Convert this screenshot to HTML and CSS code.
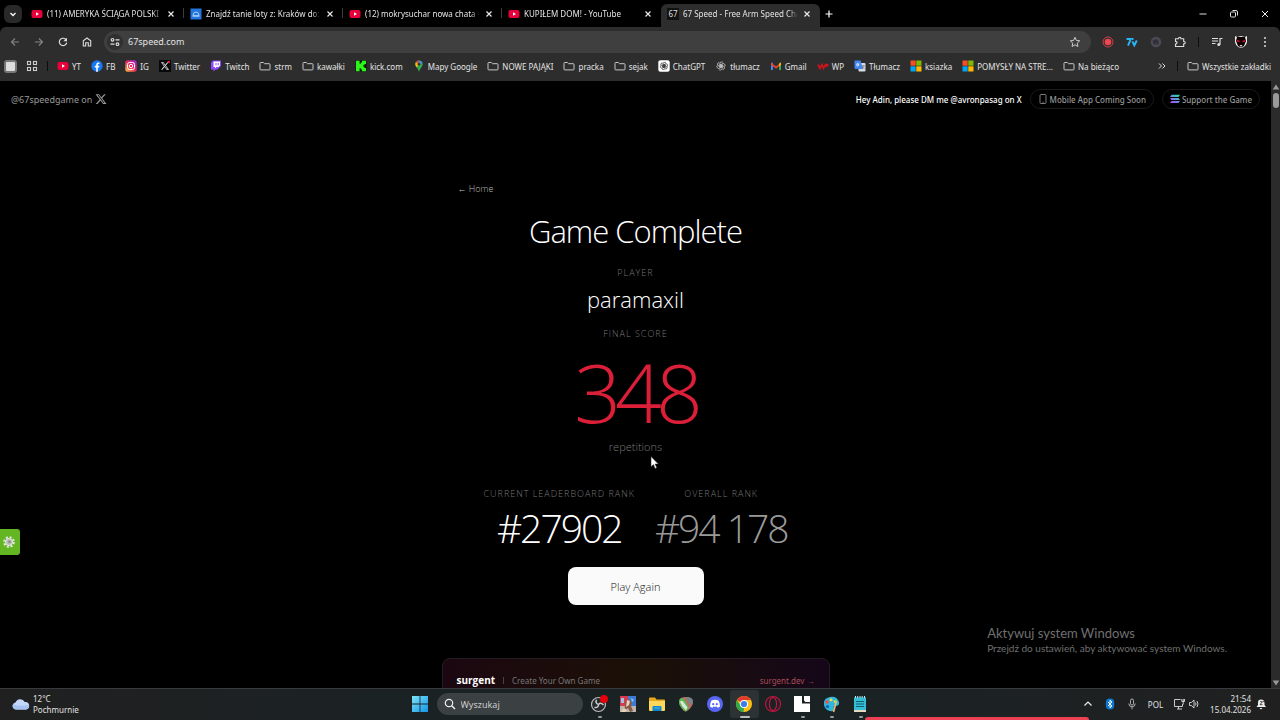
FILE: index.html
```html
<!DOCTYPE html>
<html lang="pl">
<head>
<meta charset="UTF-8">
<meta name="viewport" content="width=device-width, initial-scale=1.0">
<title>67 Speed - Free Arm Speed Challenge</title>
<link rel="stylesheet" href="styles.css">
</head>
<body>

<svg class="defs" aria-hidden="true">
<symbol id="close" viewBox="0 0 10 10"><path d="M2.5 2.5l5 5M7.5 2.5l-5 5" stroke="#e8e8e8" stroke-width="1.2"/></symbol>
<symbol id="youtube" viewBox="0 0 12 12"><rect x="0.5" y="2" width="11" height="8" rx="2" fill="#e8003a"/><path d="M5 4.3v3.4L8 6z" fill="#fff"/></symbol>
<symbol id="folder" viewBox="0 0 12 12"><path d="M1 9.2V3.2q0-.7.7-.7h2.6l1.2 1.2h4.8q.7 0 .7.7v4.8q0 .7-.7.7H1.7q-.7 0-.7-.7z" fill="none" stroke="#c7c7c7" stroke-width="1"/></symbol>
<symbol id="xlogo" viewBox="0 0 24 24"><path fill="currentColor" fill-rule="evenodd" d="M18.2 2.3h3.4l-7.3 8.3L23 21.8h-6.8l-5.3-7-6 7H1.500l7.800-8.900L1 2.300h7l4.700 6.200zM17 19.800h1.900L7.100 4.200H5z"/></symbol>
<symbol id="microsoft" viewBox="0 0 12 12"><path d="M.5.5h5.200v5.200H.500z" fill="#f25022"/><path d="M6.300.500h5.200v5.200H6.300z" fill="#7fba00"/><path d="M.500 6.300h5.200v5.200H.500z" fill="#00a4ef"/><path d="M6.300 6.300h5.200v5.200H6.300z" fill="#ffb900"/></symbol>
<symbol id="openai" viewBox="0 0 24 24"><g fill="none" stroke="currentColor" stroke-width="1.8"><path id="petal" d="M9 12V6.500a4.500 4.500 0 0 1 8.300-2.200M12 10.200l5.200 3"/><use href="#petal" transform="rotate(60 12 12)"/><use href="#petal" transform="rotate(120 12 12)"/><use href="#petal" transform="rotate(180 12 12)"/><use href="#petal" transform="rotate(240 12 12)"/><use href="#petal" transform="rotate(300 12 12)"/></g></symbol>
</svg>

<!-- Browser -->
<header class="browser">
<div class="tabs">
<button class="tab-search" aria-label="Szukaj kart"><svg viewBox="0 0 10 10" width="10" height="10"><path d="M2.500 4l2.500 2.500L7.500 4" fill="none" stroke="#fff" stroke-width="1.300"/></svg></button>
<div class="tab"><svg class="icon"><use href="#youtube"/></svg><span class="tab-title">(11) AMERYKA ŚCIĄGA POLSKI</span><button class="tab-close" aria-label="Zamknij"><svg><use href="#close"/></svg></button></div>
<div class="tab"><svg class="icon" viewBox="0 0 12 12"><rect x=".5" y=".5" width="11" height="11" fill="#2375dd"/><path d="M3 7.700q0-3.700 3-3.700t3 3.700zM2.500 8.200h7" fill="none" stroke="#a9d0ff" stroke-width="1"/></svg><span class="tab-title">Znajdź tanie loty z: Kraków do:</span><button class="tab-close" aria-label="Zamknij"><svg><use href="#close"/></svg></button></div>
<div class="tab"><svg class="icon"><use href="#youtube"/></svg><span class="tab-title">(12) mokrysuchar nowa chata -</span><button class="tab-close" aria-label="Zamknij"><svg><use href="#close"/></svg></button></div>
<div class="tab"><svg class="icon"><use href="#youtube"/></svg><span class="tab-title">KUPIŁEM DOM! - YouTube</span><button class="tab-close" aria-label="Zamknij"><svg><use href="#close"/></svg></button></div>
<div class="tab active"><span class="icon favicon">67</span><span class="tab-title">67 Speed - Free Arm Speed Cha</span><button class="tab-close" aria-label="Zamknij"><svg><use href="#close"/></svg></button></div>
<button class="new-tab" aria-label="Nowa karta"><svg viewBox="0 0 10 10" width="10" height="10"><path d="M5 1.500v7M1.500 5h7" stroke="#fff" stroke-width="1.200"/></svg></button>
<div class="window-buttons">
<button aria-label="Minimalizuj"><svg viewBox="0 0 10 10" width="10" height="10"><path d="M1.500 5h7" stroke="#ddd"/></svg></button>
<button aria-label="Przywróć"><svg viewBox="0 0 10 10" width="10" height="10"><g fill="none" stroke="#ddd"><rect x="1.500" y="3" width="5" height="5" rx="1"/><path d="M3.500 1.500h3.500q1.500 0 1.500 1.500v3.500"/></g></svg></button>
<button aria-label="Zamknij okno"><svg viewBox="0 0 10 10" width="10" height="10"><path d="M2 2l6 6M8 2l-6 6" stroke="#eee"/></svg></button>
</div>
</div>

<div class="toolbar">
<button class="tool" aria-label="Wstecz"><svg viewBox="0 0 12 12"><path d="M10 6H2.500M6 2.500L2.500 6 6 9.500" fill="none" stroke="#858585" stroke-width="1.100"/></svg></button>
<button class="tool" aria-label="Dalej"><svg viewBox="0 0 12 12"><path d="M2 6h7.500M6 2.500L9.500 6 6 9.500" fill="none" stroke="#858585" stroke-width="1.100"/></svg></button>
<button class="tool" aria-label="Odśwież"><svg viewBox="0 0 12 12"><path d="M9.200 4A3.700 3.700 0 1 0 9.700 6.600" fill="none" stroke="#ddd" stroke-width="1.200"/><path d="M10 1.700v3.600H6.400z" fill="#ddd"/></svg></button>
<button class="tool" aria-label="Strona główna"><svg viewBox="0 0 12 12"><path d="M2.300 10V4.700L6 2l3.700 2.700V10H7.300V6.800H4.700V10z" fill="none" stroke="#ddd" stroke-width="1.100"/></svg></button>
<div class="omnibox">
<button class="site-info" aria-label="Informacje o witrynie"><svg viewBox="0 0 12 12" width="12" height="12"><g fill="none" stroke="#ddd" stroke-width="1.200"><circle cx="3.500" cy="3.800" r="1.300"/><path d="M6.500 3.800h4M1.500 8.200h4"/><circle cx="8.500" cy="8.200" r="1.300"/></g></svg></button>
<input type="text" value="67speed.com" aria-label="Adres">
<button class="star" aria-label="Dodaj do zakładek"><svg viewBox="0 0 12 12" width="12" height="12"><path d="M6 1.300l1.400 3.100 3.300.400-2.400 2.300.600 3.400L6 8.800l-2.900 1.700.600-3.400-2.400-2.300 3.300-.400z" fill="none" stroke="#ccc"/></svg></button>
</div>
<button class="tool" aria-label="Nagrywanie"><svg viewBox="0 0 12 12"><circle cx="6" cy="6" r="5" fill="none" stroke="#d0424c"/><circle cx="6" cy="6" r="3.300" fill="#ef4650"/></svg></button>
<button class="tool" aria-label="7TV"><svg viewBox="0 0 12 12"><path d="M.5 3h4.300L2 9.700M6 3h1.500M6.300 5.300l2 4 2.500-4.800" fill="none" stroke="#29b6f6" stroke-width="1.900"/></svg></button>
<button class="tool" aria-label="Rozszerzenie"><svg viewBox="0 0 12 12"><circle cx="6" cy="6" r="5.200" fill="#4d4a55"/><path d="M2.500 5q2-3 5.500-1l1 3-2 2.500-1-3-1 2.500q-2-1-2.500-4z" fill="#303038"/></svg></button>
<button class="tool" aria-label="Rozszerzenia"><svg viewBox="0 0 12 12"><path d="M1.500 2.800h3q0-1.500 1.200-1.500t1.200 1.500h2.800v2.700q1.600 0 1.600 1.200T9.700 7.900v2.600H1.500V8q1.500 0 1.500-1.300T1.500 5.400z" fill="none" stroke="#ddd" stroke-width="1.100"/></svg></button>
<span class="divider"></span>
<button class="tool" aria-label="Multimedia"><svg viewBox="0 0 12 12"><path d="M1 2.500h6M1 5h6M1 7.500h3.500M9 8.500V2.500h2.500" fill="none" stroke="#ddd" stroke-width="1.200"/><circle cx="7.800" cy="8.500" r="1.500" fill="#ddd"/></svg></button>
<button class="tool" aria-label="Profil"><svg class="avatar" viewBox="0 0 14 14"><path d="M1 1l2 1 4-1 4 1 2-1v6q-1 5-6 6-5-1-6-6z" fill="#eee"/><path d="M3 2h8l1 4-2 5-3 1.500L4 11 2 6z" fill="#100"/><path d="M3 5l3 1-1 1-2-.500zM11 5L8 6l1 1 2-.500z" fill="#f2103c"/><path d="M5.500 10h3L7 12z" fill="#ddd"/></svg></button>
<button class="tool" aria-label="Menu"><svg viewBox="0 0 12 12"><g fill="#ddd"><circle cx="6" cy="2" r="1"/><circle cx="6" cy="6" r="1"/><circle cx="6" cy="10" r="1"/></g></svg></button>
</div>

<nav class="bookmarks">
<button class="square" aria-label="Panel boczny"></button>
<button class="tool apps" aria-label="Aplikacje"><svg viewBox="0 0 12 12"><g fill="none" stroke="#ccc" stroke-width="1.100"><rect x="1.500" y="1.500" width="3" height="3"/><rect x="7.500" y="1.500" width="3" height="3"/><rect x="1.500" y="7.500" width="3" height="3"/><rect x="7.500" y="7.500" width="3" height="3"/></g></svg></button>
<span class="divider"></span>
<div class="bookmark-list">
<a href="#"><svg class="icon"><use href="#youtube"/></svg>YT</a>
<a href="#"><svg class="icon" viewBox="0 0 12 12"><circle cx="6" cy="6" r="5.700" fill="#1877f2"/><path d="M5.200 11.700V7.500H3.800V5.800h1.400V4.700Q5.200 2.600 7.300 2.600h1.100v1.500h-.800q-.8 0-.8.800v.9h1.600l-.3 1.700H6.800v4.200z" fill="#fff"/></svg>FB</a>
<a href="#"><svg class="icon" viewBox="0 0 12 12"><defs><linearGradient id="ig" x1="0" y1="1" x2="1" y2="0"><stop offset="0" stop-color="#ffc83d"/><stop offset=".5" stop-color="#f0255f"/><stop offset="1" stop-color="#8e2be2"/></linearGradient></defs><rect x=".3" y=".3" width="11.400" height="11.400" rx="2.500" fill="url(#ig)"/><g fill="none" stroke="#fff"><rect x="2.500" y="2.500" width="7" height="7" rx="2"/><circle cx="6" cy="6" r="1.700"/></g></svg>IG</a>
<a href="#"><svg class="icon" viewBox="0 0 12 12"><rect width="12" height="12" fill="#080808"/><use href="#xlogo" x="1.500" y="1.500" width="9" height="9"/><circle cx="9.800" cy="2" r="1.300" fill="#e02344"/></svg>Twitter</a>
<a href="#"><svg class="icon" viewBox="0 0 12 12"><path d="M3 .5L1 2.500v7h2.500v2L5.500 9.500h2L11 6V.5z" fill="#9146ff"/><path d="M3.500 1.500H10v4L8.500 7h-2L5 8.500V7H3.500z" fill="#fff"/><path d="M6 3v2.300M8.200 3v2.300" stroke="#9146ff"/></svg>Twitch</a>
<a href="#"><svg class="icon"><use href="#folder"/></svg>strm</a>
<a href="#"><svg class="icon"><use href="#folder"/></svg>kawałki</a>
<a href="#"><svg class="icon" viewBox="0 0 12 12"><rect x=".5" y=".5" width="11" height="11" fill="#0b1a08"/><path d="M1 .8h3.600v3h1.200V2.500H7V.8h4v3.300H9.500v1.200H8.300v1.400h1.200v1.200H11v3.300H7V9.500H5.800V8.200H4.600v3H1z" fill="#2df51c"/></svg>kick.com</a>
<a href="#"><svg class="icon" viewBox="0 0 12 12"><path d="M6 .5A3.700 3.700 0 0 1 9.700 4.200Q9.700 6 8 8 6.600 9.700 6 11.700 5.400 9.700 4 8 2.300 6 2.300 4.200A3.700 3.700 0 0 1 6 .5z" fill="#34a853"/><path d="M6 .5A3.700 3.700 0 0 1 9.500 3L6 4.200z" fill="#4285f4"/><path d="M6 .500A3.700 3.700 0 0 0 2.800 2.200L6 4.500z" fill="#ea4335"/><path d="M2.800 2.200Q2 4 2.600 5.600L3.500 7.300 6 4.500z" fill="#fbbc04"/><circle cx="6" cy="4.200" r="1.300" fill="#2d2d2d"/></svg>Mapy Google</a>
<a href="#"><svg class="icon"><use href="#folder"/></svg>NOWE PAJĄKI</a>
<a href="#"><svg class="icon"><use href="#folder"/></svg>pracka</a>
<a href="#"><svg class="icon"><use href="#folder"/></svg>sejak</a>
<a href="#"><svg class="icon" viewBox="0 0 12 12" color="#222"><rect x=".3" y=".3" width="11.400" height="11.400" rx="2" fill="#fff"/><use href="#openai" x="1.500" y="1.500" width="9" height="9"/></svg>ChatGPT</a>
<a href="#"><svg class="icon" viewBox="0 0 12 12" color="#ccc"><use href="#openai" x="1" y="1" width="10" height="10"/></svg>tłumacz</a>
<a href="#"><svg class="icon" viewBox="0 0 12 12"><path d="M1 10V2.800h2V10z" fill="#4285f4"/><path d="M9 10V2.800h2V10z" fill="#34a853"/><path d="M1 2.500l5 4 5-4v2.300l-5 4-5-4z" fill="#ea4335"/><path d="M9 4l2-1.600v2.400L9 6.400z" fill="#fbbc04"/></svg>Gmail</a>
<a href="#"><svg class="icon" viewBox="0 0 12 12"><path d="M1 4.500l2 4 2-4 1.500 4 2-4h2.200q.5 1.500-2 1.700" fill="none" stroke="#c9141e" stroke-width="1.700"/></svg>WP</a>
<a href="#"><svg class="icon" viewBox="0 0 12 12"><rect x="4.500" y="3" width="7" height="8.500" rx="1" fill="#d5dbe4"/><path d="M.5.5h6l2.500 8.500H1.500q-1 0-1-1z" fill="#4285f4"/><path d="M5.300 4H4v.9h.8Q4.500 6 3.700 6q-1.100 0-1.100-1.300T3.900 3.300" fill="none" stroke="#fff" stroke-width=".8"/><path d="M7.500 6h3.500M9.200 5v1q-.3 2-1.500 3M8.500 7l2 2" stroke="#666" stroke-width=".6" fill="none"/></svg>Tłumacz</a>
<a href="#"><svg class="icon"><use href="#microsoft"/></svg>ksiazka</a>
<a href="#"><svg class="icon"><use href="#microsoft"/></svg>POMYSŁY NA STRE...</a>
<a href="#"><svg class="icon"><use href="#folder"/></svg>Na bieżąco</a>
</div>
<button class="more" aria-label="Więcej zakładek"><svg viewBox="0 0 10 10" width="10" height="10"><path d="M2 2.500L4.500 5 2 7.500M5.500 2.500L8 5 5.500 7.500" fill="none" stroke="#ddd"/></svg></button>
<span class="divider"></span>
<a class="all-bookmarks" href="#"><svg class="icon"><use href="#folder"/></svg>Wszystkie zakładki</a>
</nav>
</header>

<!-- Page -->
<div class="viewport">
<div class="page">
<div class="topbar">
<a class="handle" href="#">@67speedgame on <svg width="12" height="12"><use href="#xlogo"/></svg></a>
<div class="topbar-right">
<span class="notice">Hey Adin, please DM me @avronpasag on X</span>
<button class="pill"><svg viewBox="0 0 10 10" width="10" height="10"><rect x="2" y=".5" width="6" height="9" rx="1" fill="none" stroke="#999" stroke-width=".8"/><path d="M4.200 8.200h1.600" stroke="#999" stroke-width=".6"/></svg>Mobile App Coming Soon</button>
<button class="pill"><svg viewBox="0 0 10 10" width="10" height="10"><defs><linearGradient id="sol" x1="1" y1="0" x2="0" y2="1"><stop offset="0" stop-color="#14f195"/><stop offset=".5" stop-color="#6d8be0"/><stop offset="1" stop-color="#b13dff"/></linearGradient></defs><path d="M1.500.8H10L8.500 2.900H0zM0 3.900h8.500L10 6H1.500zM1.500 7H10L8.500 9.100H0z" fill="url(#sol)"/></svg>Support the Game</button>
</div>
</div>

<main class="result">
<a class="home" href="#">← Home</a>
<h1>Game Complete</h1>
<p class="label">Player</p>
<p class="player">paramaxil</p>
<p class="label">Final score</p>
<p class="score">348</p>
<p class="unit">repetitions</p>
<div class="ranks">
<div class="rank"><p class="label">Current leaderboard rank</p><p class="rank-value">#27902</p></div>
<div class="rank overall"><p class="label">Overall rank</p><p class="rank-value">#94 178</p></div>
</div>
<button class="play">Play Again</button>
<a class="promo" href="#"><strong>surgent</strong><span class="promo-bar"></span><span class="promo-text">Create Your Own Game</span><span class="promo-link">surgent.dev →</span></a>
</main>

<button class="settings" aria-label="Ustawienia"><svg viewBox="0 0 14 14" width="14" height="14"><circle cx="7" cy="7" r="4.700" fill="none" stroke="#dfe5da" stroke-width="2.400" stroke-dasharray="2 1.690"/><circle cx="7" cy="7" r="3.500" fill="#b9bdb5" stroke="#e4e8e0"/><circle cx="7.500" cy="6.800" r="1.500" fill="#8e948a"/></svg></button>
<div class="activate"><p class="activate-title">Aktywuj system Windows</p><p>Przejdź do ustawień, aby aktywować system Windows.</p></div>
</div>
<div class="scrollbar">
<svg viewBox="0 0 8 8" width="8" height="8"><path d="M4 1.500L7.300 6.500H.7z" fill="#999"/></svg>
<span class="thumb"></span>
<svg class="down" viewBox="0 0 8 8" width="8" height="8"><path d="M4 6.500L.7 1.500h6.600z" fill="#999"/></svg>
</div>
<svg class="cursor" viewBox="0 0 9 14" width="9" height="14"><path d="M1 .5v10.300l2.400-2.200 1.700 4 1.700-.8-1.700-3.800h3.300z" fill="#fff" stroke="#222" stroke-width=".5"/></svg>
</div>

<!-- Taskbar -->
<footer class="taskbar">
<button class="weather"><svg viewBox="0 0 18 12" width="18" height="12"><path d="M4 11.500a3.500 3.500 0 0 1-.5-6.900A5 5 0 0 1 12.700 4 3.800 3.800 0 0 1 14 11.500z" fill="#c3d7f8"/><path d="M4 11.500a3.500 3.500 0 0 1-3-5.300Q7 9 16.800 7A3.800 3.800 0 0 1 14 11.500z" fill="#a5c3f2"/></svg><span>12°C<br>Pochmurnie</span></button>

<div class="dock">
<button class="app" aria-label="Start"><svg viewBox="0 0 18 18"><defs><linearGradient id="win" x1="0" y1="0" x2="1" y2="1"><stop offset="0" stop-color="#7ce5fb"/><stop offset="1" stop-color="#1593e6"/></linearGradient></defs><path d="M1 1h7.600v7.600H1zM9.400 1H17v7.600H9.400zM1 9.400h7.600V17H1zM9.400 9.400H17V17H9.400z" fill="url(#win)"/></svg></button>
<label class="search"><svg viewBox="0 0 12 12" width="12" height="12"><circle cx="5" cy="5" r="3.700" fill="none" stroke="#eee" stroke-width="1.200"/><path d="M7.700 7.700L11 11" stroke="#eee" stroke-width="1.500"/></svg><input type="text" placeholder="Wyszukaj" aria-label="Wyszukaj"></label>
<button class="app running" aria-label="OBS"><svg viewBox="0 0 18 18"><circle cx="8.500" cy="9.500" r="7" fill="#25292b" stroke="#bbb" stroke-width="1.200"/><g fill="none" stroke="#ccc" stroke-width="1.500"><path d="M8.500 9.500Q5 8.500 6.500 4.700"/><path d="M8.500 9.500Q11 7 13.500 10"/><path d="M8.500 9.500Q8.500 13 4.500 12.500"/></g><circle cx="14" cy="4" r="4" fill="#e5000b"/></svg></button>
<button class="app" aria-label="Gra"><svg viewBox="0 0 18 18"><path d="M1 1h8v16H1z" fill="#d83a4d"/><path d="M9 1h8v16H9z" fill="#3c7bd4"/><path d="M1 11h16v6H1z" fill="#bdb4ac"/><path d="M2 3h3v5H2zM12 3l3 2-2 2z" fill="#9dc2ee"/><path d="M6 7l4-3 3 4-1 3 2 5-3 1-2-4-4 3 1-5z" fill="#8a5846"/><path d="M8 5l3 1-1 4-3 2zM5 13l3 2-2 2H2z" fill="#e8d3bb"/></svg></button>
<button class="app" aria-label="Eksplorator plików"><svg viewBox="0 0 18 18"><path d="M1 3.500q0-1 1-1h5l1.500 2h7.500q1 0 1 1V14H1z" fill="#e9a91d"/><path d="M1 6h16v9q0 1-1 1H2q-1 0-1-1z" fill="#ffd75b"/><path d="M4.500 16v-4q0-1 1-1h7q1 0 1 1v4z" fill="#1587cd"/><path d="M6 13h6" stroke="#55b5e9"/></svg></button>
<button class="app" aria-label="Edytor"><svg viewBox="0 0 18 18"><path d="M2 7Q2 2 9 2t7 5q0 3-2.500 6T9 16.500 4.500 13 2 7z" fill="#b66e60"/><path d="M2 7Q2 3.500 5 2.800 8 4 9.500 8l2.500 5q-1.500 3-3 3.500Q7 16 4.500 13T2 7z" fill="#5eb558"/><path d="M3 7q2-3 4.500 1.500l3 4-1.500 3-3.500-4z" fill="#d6ead7"/><path d="M9 2q7 0 7 5l-1 3-4-3z" fill="#77848a"/></svg></button>
<button class="app" aria-label="Discord"><svg viewBox="0 0 18 18"><circle cx="9" cy="9" r="8" fill="#5865f2"/><path d="M5.500 5.500q3.500-1.300 7 0Q14 8 14 11.500q-1.200 1.100-2.500 1.300l-.700-1.200q-1.800.500-3.600 0l-.700 1.200Q5.200 12.600 4 11.500 4 8 5.500 5.500z" fill="#fff"/><circle cx="7.200" cy="9.200" r="1.100" fill="#5865f2"/><circle cx="10.800" cy="9.200" r="1.100" fill="#5865f2"/></svg></button>
<button class="app running current" aria-label="Chrome"><svg viewBox="0 0 18 18"><circle cx="9" cy="9" r="8" fill="#fbc116"/><path d="M9 9L2.100 5A8 8 0 0 1 15.900 5H9z" fill="#e33b2e"/><path d="M2.100 5l3.500 6L9 13l-.5 4A8 8 0 0 1 2.100 5z" fill="#2da94f"/><circle cx="9" cy="9" r="4" fill="#fff"/><circle cx="9" cy="9" r="3.100" fill="#3b7ded"/></svg></button>
<button class="app" aria-label="Opera GX"><svg viewBox="0 0 18 18"><g fill="none" stroke="#c01542"><circle cx="9" cy="9" r="7.500" stroke-width="1.200"/><ellipse cx="9" cy="9" rx="3.600" ry="6.500" stroke-width="1.200"/></g></svg></button>
<button class="app running" aria-label="Aplikacja"><svg viewBox="0 0 18 18"><path d="M1 1h8v7.500h8V17H1zM11 1h6v6h-4.500L11 5.500z" fill="#fff"/></svg></button>
<button class="app running" aria-label="Paint"><svg viewBox="0 0 18 18"><path d="M2 10Q1 3 8 2t9 5q1 4-4 4-2 0-1 3 0 3-4 2-5-1-6-6z" fill="#31b6da"/><circle cx="5" cy="7" r="1.700" fill="#f34c4c"/><circle cx="9" cy="4.700" r="1.500" fill="#ffd649"/><circle cx="13" cy="6.500" r="1.500" fill="#a9e368"/><circle cx="5.500" cy="11.500" r="1.600" fill="#1162b8"/><path d="M14.500 6l-3 11" stroke="#e9b374" stroke-width="1.700"/></svg></button>
<button class="app running" aria-label="Notatnik"><svg viewBox="0 0 18 18"><path d="M3 2.500h12V15H3z" fill="#35bfd2"/><path d="M3 15h12v2H3z" fill="#e5d8c2"/><path d="M5 6.500h8M5 9h8M5 11.500h8" stroke="#125d75" stroke-width="1.100"/><path d="M4.500 1v2M6.700 1v2M9 1v2M11.200 1v2M13.500 1v2" stroke="#b9edf4"/></svg></button>
</div>

<div class="tray">
<button aria-label="Pokaż ukryte ikony"><svg viewBox="0 0 12 12" width="12" height="12"><path d="M2.500 7.500L6 4l3.500 3.500" fill="none" stroke="#eee" stroke-width="1.200"/></svg></button>
<button class="bluetooth" aria-label="Bluetooth"><svg viewBox="0 0 12 12" width="12" height="12"><rect x="1.800" y=".5" width="8.400" height="11" rx="4" fill="#0b78d4"/><path d="M4 4l4 4-2 1.800V2.200L8 4 4 8" fill="none" stroke="#fff" stroke-width=".9"/></svg></button>
<button class="mic" aria-label="Mikrofon"><svg viewBox="0 0 12 12" width="12" height="12"><g fill="none" stroke="#bbb" stroke-width=".9"><rect x="4.500" y="1" width="3" height="6" rx="1.500"/><path d="M2.800 5.500q0 3.300 3.200 3.300t3.200-3.300M6 8.800v2.500"/></g></svg></button>
<button class="lang">POL</button>
<button class="net" aria-label="Sieć i dźwięk"><svg viewBox="0 0 12 12" width="12" height="12"><g fill="none" stroke="#ddd" stroke-width=".9"><path d="M7.500 1.500h-6v7h8V6M4 11h5M5.500 8.500V11M10.300 1v2.500M8.800 1v2.500h2.700V1M10.200 3.500v3"/></g></svg><svg viewBox="0 0 12 12" width="12" height="12"><path d="M1.500 4.500h1.800L6 2v8L3.300 7.500H1.500zM7.500 4.500q1 1.500 0 3M9 3q2 3 0 6" fill="none" stroke="#ddd" stroke-width=".9"/></svg></button>
<button class="clock">21:54<br>15.04.2026</button>
<button aria-label="Powiadomienia"><svg viewBox="0 0 12 12" width="12" height="12"><path d="M1.500 9L3 7V4.500Q3 1.500 6 1.500T9.500 4v3L11 9zM4.500 10h3L6 11.500z" fill="#eee"/><path d="M5 3.700h2.500L5 6.700h2.500M8.500 1h2.500L8.500 3.700H11" fill="none" stroke="#222" stroke-width=".8"/></svg></button>
</div>
<span class="red-strip"></span>
</footer>

</body>
</html>
```
FILE: styles.css
```css
* {
box-sizing: border-box;
}

body {
font-family: "Noto Sans", "Open Sans", sans-serif;
margin: 0;
background: #000; color: #e3e3e3;
display: flex; flex-direction: column;
height: 100vh;
overflow: hidden;
font-size: 8px;
}

p, h1 {
margin: 0;
}

a {
color: inherit; text-decoration: none;
}

button {
font: inherit; color: inherit;
background: none; border: none; padding: 0;
display: flex; align-items: center; justify-content: center;
}

input {
font: inherit; color: inherit;
background: none; border: none; padding: 0; outline: none;
min-width: 0;
}

svg {
display: block; flex: none;
}

.defs {
position: absolute;
width: 0; height: 0;
}

.icon {
width: 12px; height: 12px;
flex: none;
}

/* Tab strip */
.tabs {
display: flex; align-items: center;
height: 27px;
padding-left: 4px;
}

.tab-search {
width: 18px; height: 18px;
background: #292929; border-radius: 6px;
margin-right: 3px;
}

.tab {
display: flex; align-items: center;
gap: 4px;
width: 159px; height: 23px;
align-self: flex-end;
padding: 0 8px 4px 6px;
position: relative;
}

.tab:not(.active)::after {
content: "";
position: absolute; right: 0; top: 4px;
width: 1px; height: 10px;
background: #3c3c3c;
}

.tab:nth-child(5)::after {
display: none;
}

.tab-title {
flex: 1;
overflow: hidden; white-space: nowrap;
-webkit-mask-image: linear-gradient(to right, #000 92%, transparent);
mask-image: linear-gradient(to right, #000 92%, transparent);
}

.tab.active {
background: #2d2d2d;
border-radius: 6px 6px 0 0;
}

.tab-close svg {
width: 10px; height: 10px;
}

.favicon {
background: #111; color: #ddd;
font-size: 8px; line-height: 12px;
text-align: center;
}

.new-tab {
width: 18px; height: 18px;
}

.window-buttons {
display: flex;
margin-left: auto;
}

.window-buttons button {
width: 31px; height: 27px;
}

/* Toolbar */
.browser {
flex: none;
}

.toolbar {
display: flex; align-items: center;
background: #2d2d2d;
border-radius: 6px 6px 0 0;
height: 29px;
padding: 0 3px;
}

.tool {
width: 24px; height: 24px;
flex: none;
}

.tool svg {
width: 12px; height: 12px;
}

.tool .avatar {
width: 14px; height: 14px;
}

.divider {
width: 1px; height: 10px;
background: #0d0d0d;
margin: 0 6px;
flex: none;
}

.omnibox {
flex: 1;
display: flex; align-items: center;
background: #3f3f3f;
border-radius: 11px;
height: 22px;
margin: 0 5px;
padding: 0 10px 0 3px;
font-size: 9px;
}

.omnibox input {
flex: 1;
padding-left: 5px;
}

.site-info {
width: 16px; height: 16px;
background: #303030; border-radius: 50%;
}

/* Bookmarks */
.bookmarks {
display: flex; align-items: center;
background: #2d2d2d;
height: 25px;
padding: 0 9px 5px 4px;
white-space: nowrap;
}

.square {
width: 13px; height: 13px;
background: #ddd;
border: 2px solid #777; border-radius: 3px;
}

.apps {
margin-left: 3px;
}

.bookmarks .divider {
margin-left: 3px; margin-right: 9px;
}

.bookmark-list {
flex: 1;
display: flex; gap: 10px;
overflow: hidden;
}

.bookmark-list a, .all-bookmarks {
display: flex; align-items: center; gap: 3px;
}

.more {
margin-right: 7px;
}

/* Page */
.viewport {
flex: 1;
display: flex;
min-height: 0;
position: relative;
}

.page {
flex: 1;
position: relative;
overflow: hidden;
}

.topbar {
display: flex; justify-content: space-between; align-items: center;
padding: 8px 11px 0;
}

.handle {
display: flex; align-items: center; gap: 3px;
font-size: 9px; color: #999;
}

.topbar-right {
display: flex; align-items: center; gap: 8px;
font-weight: 500;
}

.notice {
color: #fff;
}

.pill {
height: 20px;
gap: 2px;
padding: 0 7px;
border: 1px solid #1a1a1a; border-radius: 10px;
color: #999;
}

.result {
display: flex; flex-direction: column; align-items: center;
max-width: 388px;
margin: 74px auto 0;
font-family: "Open Sans", sans-serif;
font-weight: 300;
text-align: center;
}

.home {
align-self: flex-start;
margin-left: 16px;
font-size: 9px; line-height: 12px;
color: #bbb;
}

h1 {
margin-top: 16px;
font-size: 31px; line-height: 40px;
font-weight: 300;
letter-spacing: -1px;
color: #fff;
}

.label {
margin-top: 16px;
font-size: 9px; line-height: 12px;
letter-spacing: 1px;
text-transform: uppercase;
color: #777;
}

.player {
margin: 4px 0 -3px;
font-size: 22px; line-height: 32px;
color: #fff;
}

.score {
margin-top: 11px;
font-size: 82px; line-height: 80px;
letter-spacing: -6px;
color: #dc1f38;
}

.unit {
margin-top: 8px;
font-size: 11px; line-height: 16px;
color: #777;
}

.ranks {
display: flex; gap: 20px;
margin-top: 17px;
}

.rank-value {
margin-top: 4px;
font-size: 39px; line-height: 48px;
letter-spacing: -2px;
color: #fff;
}

.overall .rank-value {
color: #999;
}

.play {
width: 136px; height: 38px;
margin-top: 15px;
background: #fafafa; color: #111;
border-radius: 8px;
font-size: 11px;
}

.promo {
display: flex; align-items: center;
width: 100%; height: 44px;
margin-top: 53px;
padding: 0 14px;
border: 1px solid #241c22; border-radius: 8px;
background: linear-gradient(to right, #1c0711, #1b1006 50%, #150719);
color: #aaa;
}

.promo strong {
font-size: 10px; font-weight: 700;
color: #fff;
}

.promo-bar {
width: 1px; height: 7px;
background: #444;
margin: 0 8px;
}

.promo-text, .promo-link {
font-family: "Noto Sans", sans-serif;
font-weight: 400;
}

.promo-text {
color: #777;
}

.promo-link {
margin-left: auto;
color: #a94c55;
}

.settings {
position: absolute; left: 0; top: 448px;
width: 20px; height: 26px;
padding-right: 2px;
background: #63b521;
border-radius: 0 3px 3px 0;
}

.activate {
position: absolute; right: 44px; bottom: 33px;
font-family: Lato, sans-serif;
font-size: 10px; line-height: 13px;
color: #707070;
}

.activate-title {
font-size: 13px; line-height: 18px;
}

.scrollbar {
width: 9px;
background: #2b2b2b;
display: flex; flex-direction: column; align-items: center;
padding: 2px 0 1px;
}

.thumb {
width: 6px; height: 15px;
background: #9a9a9a; border-radius: 3px;
margin-top: 2px;
}

.down {
margin-top: auto;
}

.cursor {
position: absolute; left: 650px; top: 375px;
}

/* Taskbar */
.taskbar {
flex: none;
display: grid; grid-template-columns: 1fr auto 1fr; align-items: center;
height: 32px;
padding-bottom: 1px;
background: linear-gradient(to right, #202020, #1b2224 30%, #1b2224 70%, #202020);
border-top: 1px solid #383a3b;
position: relative;
}

.weather {
justify-self: start;
gap: 3px;
padding-left: 12px;
line-height: 11px;
text-align: left;
}

.dock {
display: flex; align-items: center;
}

.app {
width: 29px; height: 28px;
border-radius: 3px;
position: relative;
}

.app svg {
width: 18px; height: 18px;
}

.running::after {
content: "";
position: absolute; left: 13px; bottom: 0;
width: 4px; height: 2px;
background: #999; border-radius: 1px;
}

.current {
background: #2d3234;
}

.current::after {
left: 10px;
width: 10px;
background: #bbb;
}

.search {
display: flex; align-items: center; gap: 5px;
width: 146px; height: 22px;
margin: 0 2px;
padding-left: 7px;
background: #3b4042;
border-radius: 11px;
font-size: 9px;
}

.search input {
flex: 1;
}

.search input::placeholder {
color: #ccc;
}

.tray {
justify-self: end;
display: flex; align-items: center; gap: 10px;
padding-right: 13px;
}

.net {
gap: 3px;
}

.clock {
line-height: 11px;
text-align: right;
margin-right: -6px;
}

.red-strip {
position: absolute; left: 865px; bottom: 0;
width: 224px; height: 3px;
background: #ed4055;
border-radius: 3px 3px 0 0;
}
```
